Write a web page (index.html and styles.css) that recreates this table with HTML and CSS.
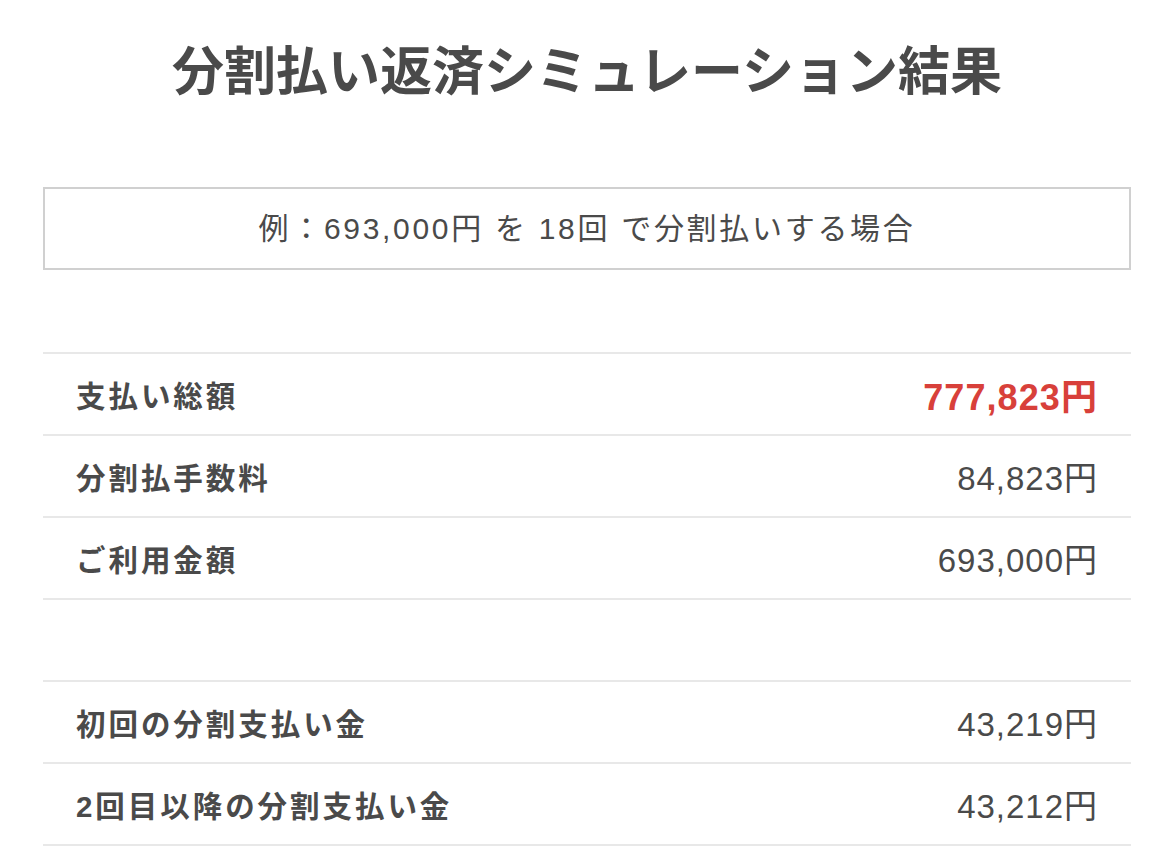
FILE: index.html
```html
<!DOCTYPE html>
<html lang="ja">

<head>
    <meta charset="UTF-8">
    <meta name="viewport" content="width=device-width, initial-scale=1.0">
    <title>分割払い返済シミュレーション結果</title>
    <link rel="stylesheet" href="styles.css">
</head>

<body>
    <div class="page">
        <h1>分割払い返済シミュレーション結果</h1>

        <div class="example">例：693,000円 を 18回 で分割払いする場合</div>

        <div class="result-table">
            <div class="row">
                <span class="label">支払い総額</span>
                <span class="value total">777,823円</span>
            </div>
            <div class="row">
                <span class="label">分割払手数料</span>
                <span class="value">84,823円</span>
            </div>
            <div class="row">
                <span class="label">ご利用金額</span>
                <span class="value">693,000円</span>
            </div>
        </div>

        <div class="result-table">
            <div class="row">
                <span class="label">初回の分割支払い金</span>
                <span class="value">43,219円</span>
            </div>
            <div class="row">
                <span class="label">2回目以降の分割支払い金</span>
                <span class="value">43,212円</span>
            </div>
        </div>
    </div>
</body>

</html>
```

FILE: styles.css
```css
body {
    margin: 0;
    font-family: "Liberation Sans", "Noto Sans CJK JP", sans-serif;
    color: #4a4a4a;
    background: #fff;
}

.page {
    width: 1088px;
    margin-left: 43px;
}

h1 {
    margin: 36px 0 79px;
    font-size: 52px;
    line-height: 72px;
    font-weight: bold;
    text-align: center;
}

.example {
    border: 2px solid #d0d0d0;
    line-height: 79px;
    text-align: center;
    font-size: 30px;
    letter-spacing: 0.09em;
}

.result-table {
    margin-top: 80px;
    border-bottom: 2px solid #e8e8e8;
}

.example + .result-table {
    margin-top: 82px;
}

.row {
    display: flex;
    justify-content: space-between;
    align-items: center;
    height: 80px;
    padding: 0 33px;
    border-top: 2px solid #e8e8e8;
}

.label {
    font-size: 29.5px;
    font-weight: bold;
    letter-spacing: 0.1em;
}

.value {
    font-size: 33px;
    letter-spacing: 0.03em;
}

.value.total {
    font-size: 36px;
    color: #d8403a;
    font-weight: bold;
}
```
